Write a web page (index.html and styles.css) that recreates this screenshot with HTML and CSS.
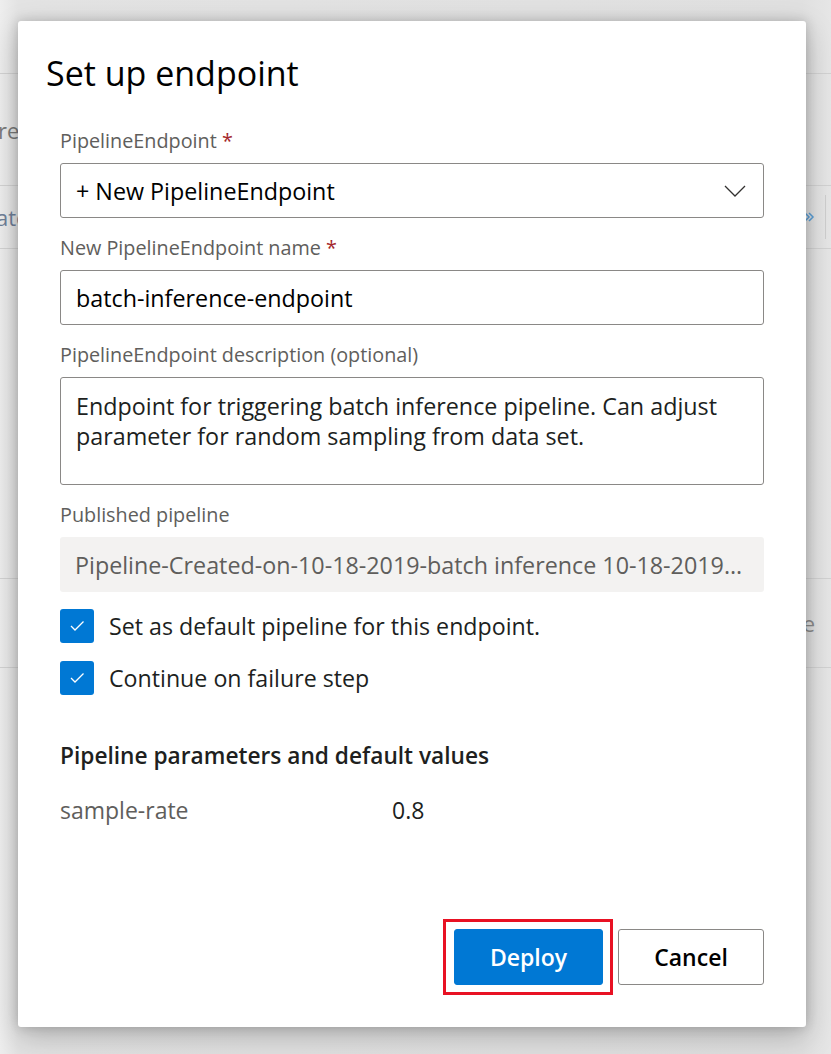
FILE: index.html
```html
<!DOCTYPE html>
<html lang="en">
<head>
<meta charset="utf-8">
<title>Set up endpoint</title>
<link rel="stylesheet" href="styles.css">
</head>
<body>
<div class="page">
  <div class="bg-row bg-row-top"></div>
  <div class="bg-row bg-row-title"><span class="bg-text">rea</span></div>
  <div class="bg-row bg-row-tabs">
    <span class="bg-link">ato</span>
    <span class="bg-tool">
      <svg class="bg-gear" width="12" height="16" viewBox="0 0 12 16"><path d="M2 4 L6 8 L2 12 M6 4 L10 8 L6 12" fill="none" stroke="#5a9fd8" stroke-width="1.5"/></svg>
    </span>
  </div>
  <div class="bg-row bg-row-body"></div>
  <div class="bg-row bg-row-item"><span class="bg-end">e</span></div>
  <div class="bg-rest"></div>
</div>

<div class="dialog" role="dialog" aria-labelledby="dlg-title">
  <h1 class="dialog-title" id="dlg-title">Set up endpoint</h1>
  <div class="dialog-body">
    <div class="field first">
      <label class="field-label">PipelineEndpoint <span class="req">*</span></label>
      <div class="control dropdown">
        <span class="control-text">+ New PipelineEndpoint</span>
        <svg class="chevron" width="22" height="12" viewBox="0 0 22 12"><path d="M1 1 L11 11 L21 1" fill="none" stroke="#323130" stroke-width="1.3"/></svg>
      </div>
    </div>
    <div class="field">
      <label class="field-label">New PipelineEndpoint name <span class="req">*</span></label>
      <div class="control"><span class="control-text">batch-inference-endpoint</span></div>
    </div>
    <div class="field">
      <label class="field-label">PipelineEndpoint description (optional)</label>
      <div class="control textarea">Endpoint for triggering batch inference pipeline. Can adjust parameter for random sampling from data set.</div>
    </div>
    <div class="field">
      <label class="field-label">Published pipeline</label>
      <div class="control disabled"><span class="control-text ellipsis">Pipeline-Created-on-10-18-2019-batch inference 10-18-2019-batch inference</span></div>
    </div>

    <div class="checks">
      <div class="check-row">
        <span class="checkbox"><svg width="16" height="12" viewBox="0 0 16 12"><path d="M2 6 L6 10 L14.5 1.5" fill="none" stroke="#fff" stroke-width="1.3"/></svg></span>
        <span class="check-label">Set as default pipeline for this endpoint.</span>
      </div>
      <div class="check-row">
        <span class="checkbox"><svg width="16" height="12" viewBox="0 0 16 12"><path d="M2 6 L6 10 L14.5 1.5" fill="none" stroke="#fff" stroke-width="1.3"/></svg></span>
        <span class="check-label">Continue on failure step</span>
      </div>
    </div>

    <h2 class="params-title">Pipeline parameters and default values</h2>
    <div class="param-row">
      <span class="param-name">sample-rate</span>
      <span class="param-value">0.8</span>
    </div>
  </div>
  <div class="dialog-footer">
    <div class="highlight-wrap">
      <button class="btn btn-primary">Deploy</button>
      <span class="highlight"></span>
    </div>
    <button class="btn btn-default">Cancel</button>
  </div>
</div>
</body>
</html>
```

FILE: styles.css
```css
* { box-sizing: border-box; }
html, body {
  margin: 0;
  padding: 0;
}
body {
  width: 831px;
  height: 1054px;
  overflow: hidden;
  position: relative;
  background: #e9e9e9;
  font-family: "Open Sans", "Noto Sans", sans-serif;
  color: #323130;
}

/* background page under the overlay */
.page {
  display: flex;
  flex-direction: column;
  height: 100%;
  background: linear-gradient(to right, #eeeeee 0, #e3e3e3 18px, #e0e0e0 calc(100% - 30px), #e6e6e6 100%);
}
.bg-row {
  border-bottom: 1px solid #d2d2d2;
  display: flex;
  align-items: center;
  color: #8c8c8c;
  font-size: 22px;
}
.bg-row-top { height: 74px; }
.bg-row-title { height: 112px; }
.bg-row-tabs { height: 63px; justify-content: space-between; }
.bg-row-body { height: 330px; }
.bg-row-item { height: 89px; justify-content: flex-end; }
.bg-text { margin-left: -2px; color: #7a7a7a; }
.bg-link { margin-left: -4px; color: #6f7f98; }
.bg-tool {
  display: flex;
  align-items: center;
  height: 44px;
  border-right: 1px solid #cfcfcf;
  padding-right: 10px;
  margin-right: 5px;
}
.bg-end { margin-right: 16px; color: #8c8c8c; }
.bg-rest { flex: 1; }

/* dialog */
.dialog {
  position: absolute;
  left: 18px;
  top: 21px;
  width: 788px;
  height: 1006px;
  background: #fff;
  border-radius: 3px;
  box-shadow: 0 0 12px rgba(0,0,0,0.18), 0 10px 30px rgba(0,0,0,0.22);
  display: flex;
  flex-direction: column;
}
.dialog-title {
  margin: 0;
  padding: 27px 42px 0 28px;
  font-size: 34px;
  font-weight: 400;
  line-height: 50px;
  color: #000;
}
.dialog-body {
  padding: 0 42px 0 42px;
}
.field { margin-top: 14px; }
.field.first { margin-top: 27px; }
.field-label {
  display: block;
  height: 32px;
  line-height: 32px;
  margin-bottom: 6px;
  font-size: 19.8px;
  color: #605e5c;
}
.req { color: #a4262c; }
.control {
  height: 55px;
  border: 1.5px solid #8a8886;
  border-radius: 3px;
  display: flex;
  align-items: center;
  padding: 0 15px;
  font-size: 23.3px;
  color: #000;
  background: #fff;
}
.control-text { flex: 1; min-width: 0; }
.ellipsis {
  white-space: nowrap;
  overflow: hidden;
  text-overflow: ellipsis;
}
.dropdown .chevron { margin-right: 2px; flex: none; }
.textarea {
  height: 108px;
  padding-top: 13px;
  line-height: 30px;
  display: block;
  color: #201f1e;
}
.disabled {
  border: none;
  background: #f3f2f1;
  color: #5f5e5c;
}

.checks {
  margin-top: 17px;
  display: flex;
  flex-direction: column;
  gap: 18px;
}
.check-row {
  display: flex;
  align-items: center;
  gap: 15px;
}
.checkbox {
  width: 34px;
  height: 34px;
  border-radius: 3px;
  background: #0078d4;
  display: flex;
  align-items: center;
  justify-content: center;
  flex: none;
}
.check-label {
  font-size: 23.2px;
  color: #201f1e;
}

.params-title {
  margin: 42px 0 0;
  font-size: 22.7px;
  font-weight: 600;
  line-height: 38px;
  color: #201f1e;
}
.param-row {
  display: flex;
  align-items: center;
  height: 38px;
  margin-top: 16px;
  font-size: 23px;
}
.param-name { width: 332px; color: #605e5c; }
.param-value { color: #201f1e; }

.dialog-footer {
  margin-top: auto;
  padding: 0 42px 42px;
  display: flex;
  justify-content: flex-end;
  gap: 15px;
}
.highlight-wrap { position: relative; display: flex; }
.highlight {
  position: absolute;
  left: -11px;
  top: -10px;
  right: -10px;
  bottom: -10px;
  border: 3px solid #e81123;
  pointer-events: none;
}
.btn {
  height: 56px;
  border-radius: 3px;
  font-family: "Open Sans", "Noto Sans", sans-serif;
  font-size: 23px;
  font-weight: 600;
  padding: 0;
  cursor: pointer;
}
.btn-primary {
  width: 149px;
  background: #0078d4;
  border: 1.5px solid #0078d4;
  color: #fff;
}
.btn-default {
  width: 146px;
  background: #fff;
  border: 1.5px solid #8a8886;
  color: #000;
}
```
